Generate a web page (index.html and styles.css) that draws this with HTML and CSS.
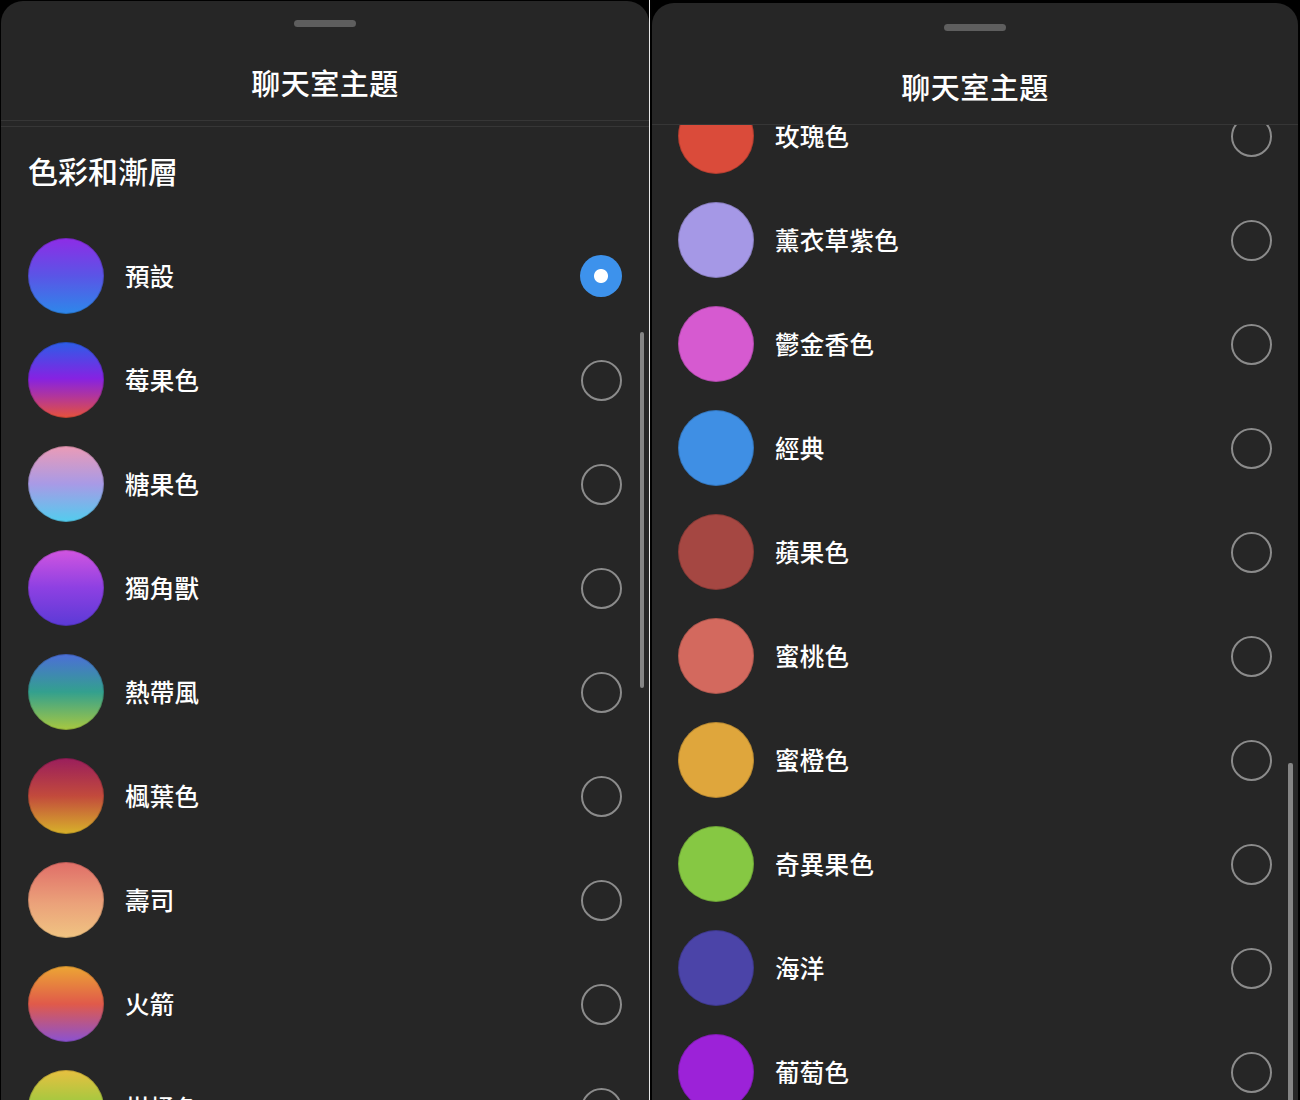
FILE: index.html
```html
<!DOCTYPE html>
<html lang="zh-Hant">
<head>
    <meta charset="UTF-8">
    <meta name="viewport" content="width=device-width, initial-scale=1.0">
    <title>聊天室主題</title>
    <link rel="stylesheet" href="styles.css">
</head>
<body>
    <div class="screens">
        <!-- 第一頁：清單頂端 -->
        <section class="sheet sheet-left">
            <header class="sheet-header">
                <div class="handle"></div>
                <h1>聊天室主題</h1>
            </header>
            <div class="sheet-body">
                <h2 class="section-title">色彩和漸層</h2>
                <ul class="theme-list">
                    <li class="theme"><span class="swatch g-default"></span><span class="name">預設</span><span class="radio checked"></span></li>
                    <li class="theme"><span class="swatch g-berry"></span><span class="name">莓果色</span><span class="radio"></span></li>
                    <li class="theme"><span class="swatch g-candy"></span><span class="name">糖果色</span><span class="radio"></span></li>
                    <li class="theme"><span class="swatch g-unicorn"></span><span class="name">獨角獸</span><span class="radio"></span></li>
                    <li class="theme"><span class="swatch g-tropical"></span><span class="name">熱帶風</span><span class="radio"></span></li>
                    <li class="theme"><span class="swatch g-maple"></span><span class="name">楓葉色</span><span class="radio"></span></li>
                    <li class="theme"><span class="swatch g-sushi"></span><span class="name">壽司</span><span class="radio"></span></li>
                    <li class="theme"><span class="swatch g-rocket"></span><span class="name">火箭</span><span class="radio"></span></li>
                    <li class="theme"><span class="swatch g-citrus"></span><span class="name">柑橘色</span><span class="radio"></span></li>
                </ul>
                <div class="scrollbar bar-top"></div>
            </div>
        </section>

        <div class="split"></div>

        <!-- 第二頁：往下捲動後的單色主題 -->
        <section class="sheet sheet-right">
            <header class="sheet-header">
                <div class="handle"></div>
                <h1>聊天室主題</h1>
            </header>
            <div class="sheet-body single">
                <ul class="theme-list scrolled">
                    <li class="theme"><span class="swatch c-rose"></span><span class="name">玫瑰色</span><span class="radio"></span></li>
                    <li class="theme"><span class="swatch c-lavender"></span><span class="name">薰衣草紫色</span><span class="radio"></span></li>
                    <li class="theme"><span class="swatch c-tulip"></span><span class="name">鬱金香色</span><span class="radio"></span></li>
                    <li class="theme"><span class="swatch c-classic"></span><span class="name">經典</span><span class="radio"></span></li>
                    <li class="theme"><span class="swatch c-apple"></span><span class="name">蘋果色</span><span class="radio"></span></li>
                    <li class="theme"><span class="swatch c-peach"></span><span class="name">蜜桃色</span><span class="radio"></span></li>
                    <li class="theme"><span class="swatch c-honey"></span><span class="name">蜜橙色</span><span class="radio"></span></li>
                    <li class="theme"><span class="swatch c-kiwi"></span><span class="name">奇異果色</span><span class="radio"></span></li>
                    <li class="theme"><span class="swatch c-ocean"></span><span class="name">海洋</span><span class="radio"></span></li>
                    <li class="theme"><span class="swatch c-grape"></span><span class="name">葡萄色</span><span class="radio"></span></li>
                </ul>
                <div class="scrollbar bar-bottom"></div>
            </div>
        </section>
    </div>
</body>
</html>
```

FILE: styles.css
```css
html, body {
    margin: 0;
    padding: 0;
    height: 1100px;
    overflow: hidden;
    background-color: #000;
}
body {
    font-family: "Noto Sans CJK TC", "Noto Sans", sans-serif;
    color: #fff;
}
.screens {
    display: flex;
    align-items: flex-start;
    height: 1100px;
}
.sheet {
    background-color: #262626;
    border-radius: 22px 22px 0 0;
    height: 1100px;
    overflow: hidden;
    display: flex;
    flex-direction: column;
}
.sheet-left {
    width: 648px;
    margin: 1px 0 0 1px;
}
.sheet-right {
    width: 646px;
    margin: 3px 0 0 2px;
}
.split {
    width: 1px;
    height: 1100px;
    background-color: #e8e8e8;
}
.sheet-header {
    display: flex;
    flex-direction: column;
    align-items: center;
    padding: 19px 0 18px;
    border-bottom: 1px solid #363636;
    flex-shrink: 0;
}
.sheet-right .sheet-header {
    padding-top: 21px;
}
.handle {
    width: 62px;
    height: 7px;
    border-radius: 4px;
    background-color: #5e5e5e;
}
.sheet-header h1 {
    margin: 35px 0 0;
    font-size: 29px;
    line-height: 40px;
    font-weight: 500;
    letter-spacing: 0.5px;
}
.sheet-body {
    position: relative;
    flex: 1;
    overflow: hidden;
    margin-top: 5px;
    border-top: 1px solid #363636;
}
.sheet-body.single {
    margin-top: 0;
    border-top: none;
}
.section-title {
    margin: 0;
    padding: 23px 27px 34px;
    font-size: 30px;
    line-height: 40px;
    font-weight: 500;
}
.theme-list {
    list-style: none;
    margin: 0;
    padding: 0 27px;
}
.theme-list.scrolled {
    margin-top: -41px;
    padding: 0 26px;
}
.theme {
    display: flex;
    align-items: center;
    height: 104px;
}
.swatch {
    width: 76px;
    height: 76px;
    border-radius: 50%;
    flex-shrink: 0;
    box-shadow: inset 0 0 0 1px rgba(0, 0, 0, 0.18);
}
.name {
    flex: 1;
    margin-left: 21px;
    font-size: 24.5px;
    line-height: 34px;
    font-weight: 500;
    letter-spacing: 0.3px;
}
.radio {
    width: 37px;
    height: 37px;
    border: 2.5px solid #8b8b8b;
    border-radius: 50%;
    flex-shrink: 0;
}
.radio.checked {
    width: 42px;
    height: 42px;
    border: none;
    background: radial-gradient(circle, #fff 0 6.5px, #3d92ec 7.5px);
}
.scrollbar {
    position: absolute;
    right: 5px;
    width: 4px;
    border-radius: 2px;
    background-color: #858585;
}
.bar-top {
    top: 205px;
    height: 356px;
}
.bar-bottom {
    top: 638px;
    height: 420px;
    width: 5px;
}

/* 漸層主題 */
.g-default { background: linear-gradient(#8e2ce6, #5a55e6 50%, #2d88ea); }
.g-berry { background: linear-gradient(#2b5ee8, #8622e2 48%, #b2369a 72%, #e6523a); }
.g-candy { background: linear-gradient(#eb9bb6, #a89ae6 50%, #52cdee); }
.g-unicorn { background: linear-gradient(#d155e0, #8d40e2 50%, #5b3ad6); }
.g-tropical { background: linear-gradient(#4c6ed8, #33a08e 50%, #a8c840); }
.g-maple { background: linear-gradient(#9a1e5c, #c24a3c 50%, #d8b22a); }
.g-sushi { background: linear-gradient(#e06e68, #eba27a 55%, #f0c482); }
.g-rocket { background: linear-gradient(#eca634, #e05a4a 50%, #8a52d2); }
.g-citrus { background: linear-gradient(#e8c040, #a8c840 40%, #8cc840); }

/* 單色主題 */
.c-rose { background-color: #da4b3a; }
.c-lavender { background-color: #a598e6; }
.c-tulip { background-color: #d65ad0; }
.c-classic { background-color: #3f8fe4; }
.c-apple { background-color: #a54742; }
.c-peach { background-color: #d3695e; }
.c-honey { background-color: #dfa63c; }
.c-kiwi { background-color: #86c843; }
.c-ocean { background-color: #4b44a8; }
.c-grape { background-color: #9c22d8; }
```
